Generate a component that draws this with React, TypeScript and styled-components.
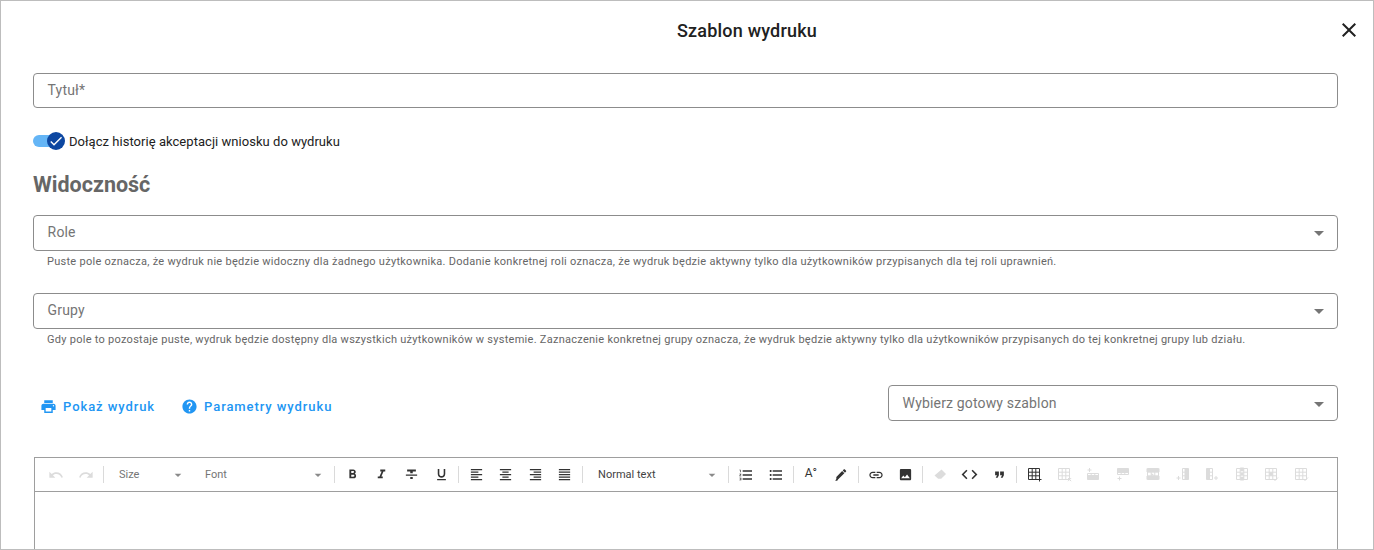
import React from 'react';
import styled, { createGlobalStyle } from 'styled-components';
import {
  MdClose, MdPrint, MdHelp, MdCheck, MdArrowDropDown, MdUndo, MdRedo, MdFormatBold, MdFormatItalic,
  MdFormatStrikethrough, MdFormatUnderlined, MdFormatAlignLeft, MdFormatAlignCenter, MdFormatAlignRight,
  MdFormatAlignJustify, MdFormatListNumbered, MdFormatListBulleted, MdLink, MdImage,
  MdCode, MdFormatQuote,
} from 'react-icons/md';

const GlobalStyle = createGlobalStyle`
  html, body { margin: 0; padding: 0; background: #fff; }
  body { font-family: Roboto, "Liberation Sans", sans-serif; }
`;

const Dialog = styled.div`
  box-sizing: border-box;
  width: 1374px;
  height: 550px;
  border: 1px solid #bdbdbd;
  overflow: hidden;
  background: #fff;
`;

const Header = styled.div`
  position: relative;
  box-sizing: border-box;
  height: 60px;
  padding: 0 0 1px 120px;
  display: flex;
  align-items: center;
  justify-content: center;
  font-size: 18px;
  font-weight: 500;
  color: #212121;
  letter-spacing: 0.2px;
`;

const CloseButton = styled.span`
  position: absolute;
  right: 12px;
  top: 17px;
  display: flex;
  font-size: 24px;
  color: #212121;
`;

const Content = styled.div`
  padding: 12px 35px 0 32px;
`;

const Field = styled.div<{ $width?: string; $height?: number; $pad?: number }>`
  box-sizing: border-box;
  width: ${p => p.$width || '100%'};
  height: ${p => p.$height || 36}px;
  border: 1px solid #8c8c8c;
  border-radius: 4px;
  display: flex;
  align-items: center;
  justify-content: space-between;
  padding: 0 6px ${p => p.$pad ?? 3}px 13.6px;
  font-size: 14px;
  letter-spacing: 0.16px;
  color: #757575;
`;

const Arrow = styled.span`
  display: flex;
  margin-bottom: -2px;
  font-size: 24px;
  color: #757575;
`;

const SwitchRow = styled.div`
  display: flex;
  align-items: center;
  margin-top: 23px;
  height: 20px;
  font-size: 13px;
  letter-spacing: 0.04px;
  color: #212121;
`;

const Track = styled.span`
  position: relative;
  width: 28px;
  height: 12px;
  margin-right: 8px;
  border-radius: 6px;
  background: #64b5f6;
`;

const Thumb = styled.span`
  position: absolute;
  right: -4px;
  top: -3px;
  width: 18px;
  height: 18px;
  border-radius: 50%;
  background: #0d47a1;
  color: #fff;
  display: flex;
  align-items: center;
  justify-content: center;
  font-size: 16px;
`;

const SectionTitle = styled.h2`
  margin: 21px 0 18px;
  font-size: 21.5px;
  line-height: 25px;
  font-weight: 700;
  color: #666;
`;

const Hint = styled.div`
  margin: 4px 0 0 14px;
  font-size: 11px;
  line-height: 14px;
  letter-spacing: 0.27px;
  color: #666;
`;

const FieldBlock = styled.div`
  margin-bottom: 24px;
`;

const ActionRow = styled.div`
  display: flex;
  align-items: center;
  justify-content: space-between;
  margin-top: 38px;
  height: 36px;
`;

const Actions = styled.div`
  display: flex;
  align-items: center;
  gap: 26px;
  padding: 6px 0 0 7px;
`;

const ActionLink = styled.span`
  display: flex;
  align-items: center;
  gap: 6px;
  font-size: 13px;
  font-weight: 500;
  letter-spacing: 0.92px;
  color: #2196f3;

  svg { font-size: 17px; }
`;

const Editor = styled.div`
  box-sizing: border-box;
  margin: 36px 0 0 1px;
  height: 120px;
  border: 1px solid #9e9e9e;
  border-bottom: none;
`;

const Toolbar = styled.div`
  height: 33px;
  display: flex;
  align-items: center;
  border-bottom: 1px solid #9e9e9e;
  padding-left: 6.3px;
`;

const Tool = styled.span<{ $off?: boolean; $size?: number }>`
  width: 29.67px;
  height: 24px;
  flex: none;
  display: flex;
  align-items: center;
  justify-content: center;
  font-size: ${p => p.$size || 15}px;
  color: ${p => (p.$off ? '#dcdcdc' : '#333')};
`;

const TextTool = styled.span`
  font-size: 12px;
  line-height: 11px;
  margin-bottom: 3px;
  color: #333;
`;

const Separator = styled.span`
  flex: none;
  width: 1px;
  height: 17px;
  margin: 0 2.17px;
  background: #dadada;
`;

const Picker = styled.span<{ $width: number; $dark?: boolean }>`
  flex: none;
  width: ${p => p.$width}px;
  display: flex;
  align-items: center;
  justify-content: space-between;
  box-sizing: border-box;
  padding: 0 6px 0 13px;
  font-size: 11px;
  color: ${p => (p.$dark ? '#424242' : '#757575')};

  svg { font-size: 16px; color: #8a8a8a; }
`;

// table buttons of the editor, the disabled ones come in light grey
const Grid = 'M1.5 1.5h11v11h-11zM1.5 5.2h11M1.5 8.8h11M5.2 1.5v11M8.8 1.5v11';

const tableIcons = [
  { stroke: `${Grid}M10.5 12.5h4M12.5 10.5v4`, fill: '' },
  { stroke: `${Grid}M11 11l3.2 3.2M14.2 11L11 14.2`, fill: '' },
  { stroke: 'M1.5 6.5h11v6h-11zM5.2 6.5v6M8.8 6.5v6M3.5 1v4M1.5 3h4', fill: 'M1.5 8h11v4.5h-11z' },
  { stroke: 'M1.5 1.5h11v6h-11zM5.2 1.5v6M8.8 1.5v6M3.5 9.5v4M1.5 11.5h4', fill: 'M1.5 1.5h11v4.5h-11z' },
  { stroke: Grid, fill: 'M.5 1.5h13v3.5H.5zM.5 9h13v3.5H.5zM5.5 6l3 2.5-3 0z' },
  { stroke: 'M7.5 1.5h6v11h-6zM10.5 1.5v11M7.5 5.2h6M7.5 8.8h6M3.5 9v4M1.5 11h4', fill: 'M9.5 1.5h4v11h-4z' },
  { stroke: 'M1.5 1.5h6v11h-6zM4.5 1.5v11M1.5 5.2h6M1.5 8.8h6M11 9v4M9 11h4', fill: 'M1.5 1.5h3v11h-3z' },
  { stroke: Grid, fill: 'M5.2.5h3.6v3.5H5.2zM5.2 10h3.6v3.5H5.2zM5.5 6h3v2h-3z' },
  { stroke: `${Grid}M10.5 14l3.5-3.5`, fill: 'M5.2 5.2h3.6v3.6H5.2z' },
  { stroke: `${Grid}M10.5 14l3.5-3.5`, fill: '' },
];

const TableIcon = ({ stroke, fill }: { stroke: string; fill: string }) => (
  <svg width="15" height="15" viewBox="0 0 15 15" fill="none" stroke="currentColor" strokeWidth="1">
    <path d={stroke} />
    {fill && <path d={fill} fill="currentColor" stroke="none" />}
  </svg>
);

const MarkerIcon = () => (
  <svg width="14" height="14" viewBox="0 0 24 24" fill="currentColor">
    <path d="M17.75 9L14 5.25l-10 10V19h3.75l10-10zm2.96-2.96c.39-.39.39-1.02 0-1.41l-2.34-2.34c-.39-.39-1.02-.39-1.41 0L15 4.25 18.75 8l1.96-1.96z" />
    <path d="M2 22l2-3h3.5l-2 3z" />
  </svg>
);

const EraserIcon = () => (
  <svg width="14" height="14" viewBox="0 0 14 14" fill="currentColor">
    <path d="M8.5 1.5l4.5 4.5-4.8 4.8H5.2L1.5 7.6z" />
  </svg>
);

const App = () => (
  <>
    <GlobalStyle />
    <Dialog>
      <Header>
        Szablon wydruku
        <CloseButton><MdClose /></CloseButton>
      </Header>
      <Content>
        <Field $height={35} $pad={1}>Tytuł*</Field>
        <SwitchRow>
          <Track><Thumb><MdCheck /></Thumb></Track>
          Dołącz historię akceptacji wniosku do wydruku
        </SwitchRow>
        <SectionTitle>Widoczność</SectionTitle>
        <FieldBlock>
          <Field>Role<Arrow><MdArrowDropDown /></Arrow></Field>
          <Hint>Puste pole oznacza, że wydruk nie będzie widoczny dla żadnego użytkownika. Dodanie konkretnej roli oznacza, że wydruk będzie aktywny tylko dla użytkowników przypisanych dla tej roli uprawnień.</Hint>
        </FieldBlock>
        <FieldBlock>
          <Field>Grupy<Arrow><MdArrowDropDown /></Arrow></Field>
          <Hint>Gdy pole to pozostaje puste, wydruk będzie dostępny dla wszystkich użytkowników w systemie. Zaznaczenie konkretnej grupy oznacza, że wydruk będzie aktywny tylko dla użytkowników przypisanych do tej konkretnej grupy lub działu.</Hint>
        </FieldBlock>
        <ActionRow>
          <Actions>
            <ActionLink><MdPrint />Pokaż wydruk</ActionLink>
            <ActionLink><MdHelp />Parametry wydruku</ActionLink>
          </Actions>
          <Field $width="450px" $pad={1}>Wybierz gotowy szablon<Arrow><MdArrowDropDown /></Arrow></Field>
        </ActionRow>
        <Editor>
          <Toolbar>
            <Tool $off $size={16}><MdUndo /></Tool>
            <Tool $off $size={16}><MdRedo /></Tool>
            <Separator />
            <Picker $width={86}>Size<MdArrowDropDown /></Picker>
            <Picker $width={140}>Font<MdArrowDropDown /></Picker>
            <Separator />
            <Tool><MdFormatBold /></Tool>
            <Tool><MdFormatItalic /></Tool>
            <Tool><MdFormatStrikethrough /></Tool>
            <Tool><MdFormatUnderlined /></Tool>
            <Separator />
            <Tool><MdFormatAlignLeft /></Tool>
            <Tool><MdFormatAlignCenter /></Tool>
            <Tool><MdFormatAlignRight /></Tool>
            <Tool><MdFormatAlignJustify /></Tool>
            <Separator />
            <Picker $width={141} $dark>Normal text<MdArrowDropDown /></Picker>
            <Separator />
            <Tool $size={16}><MdFormatListNumbered /></Tool>
            <Tool $size={16}><MdFormatListBulleted /></Tool>
            <Separator />
            <Tool><TextTool>A°</TextTool></Tool>
            <Tool><MarkerIcon /></Tool>
            <Separator />
            <Tool $size={16}><MdLink /></Tool>
            <Tool><MdImage /></Tool>
            <Separator />
            <Tool $off><EraserIcon /></Tool>
            <Tool $size={19}><MdCode /></Tool>
            <Tool><MdFormatQuote /></Tool>
            <Separator />
            {tableIcons.map((icon, i) => (
              <Tool $off={i > 0} key={i}><TableIcon stroke={icon.stroke} fill={icon.fill} /></Tool>
            ))}
          </Toolbar>
        </Editor>
      </Content>
    </Dialog>
  </>
);

export default App;
